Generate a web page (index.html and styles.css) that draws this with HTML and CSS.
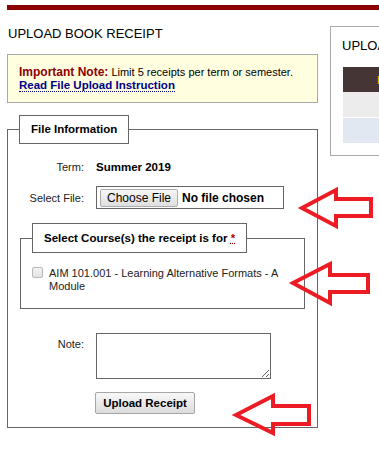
FILE: index.html
```html
<!DOCTYPE html>
<html lang="en">
<head>
    <meta charset="UTF-8">
    <meta name="viewport" content="width=device-width, initial-scale=1.0">
    <title>Upload Book Receipt</title>
    <link rel="stylesheet" href="styles.css">
</head>
<body>
    <div class="page">
        <div class="top-bar"></div>
        <div class="content">
            <div class="main-col">
                <h2 class="page-title">UPLOAD BOOK RECEIPT</h2>
                <div class="note-box">
                    <span class="note-label">Important Note:</span> Limit 5 receipts per term or semester.<br>
                    <a href="#" class="note-link">Read File Upload Instruction</a>
                </div>

                <fieldset class="file-info">
                    <legend>File Information</legend>
                    <div class="form-row">
                        <label class="form-label">Term:</label>
                        <span class="term-value">Summer 2019</span>
                    </div>
                    <div class="form-row row-file">
                        <label class="form-label" for="receiptFile">Select File:</label>
                        <input type="file" id="receiptFile" class="file-input">
                    </div>

                    <fieldset class="course-box">
                        <legend>Select Course(s) the receipt is for <abbr class="req" title="required">*</abbr></legend>
                        <label class="course-item">
                            <input type="checkbox" class="course-check">
                            <span>AIM 101.001 - Learning Alternative Formats - A Module</span>
                        </label>
                    </fieldset>

                    <div class="form-row row-note">
                        <label class="form-label" for="note">Note:</label>
                        <textarea id="note" class="note-input"></textarea>
                    </div>
                    <div class="row-submit">
                        <button class="btn-upload">Upload Receipt</button>
                    </div>
                </fieldset>
            </div>

            <div class="side-panel">
                <h2 class="panel-title">UPLOADED RECEIPTS</h2>
                <table class="receipt-table">
                    <thead>
                        <tr><th>Date</th></tr>
                    </thead>
                    <tbody>
                        <tr class="row-odd"><td>&nbsp;</td></tr>
                        <tr class="row-even"><td>&nbsp;</td></tr>
                    </tbody>
                </table>
            </div>
        </div>
    </div>

    <!-- red arrows pasted over the screenshot -->
    <svg class="callouts" width="379" height="450" viewBox="0 0 379 450">
        <polygon points="302,208 336,190 336,199 371,199 371,216 336,216 336,226" />
        <polygon points="293,283 330,264 330,275 368,275 368,292 330,292 330,303" />
        <polygon points="236,415 273,396 273,406 309,406 309,424 273,424 273,433" />
    </svg>
</body>
</html>
```

FILE: styles.css
```css
html, body {
    overflow: hidden;
}
body {
    margin: 0;
    font-family: "Liberation Sans", Arial, sans-serif;
    font-size: 11px;
    color: #222;
    background-color: #fff;
}
.page {
    padding: 5px 0 0 7px;
}
.top-bar {
    height: 5px;
    background-color: #8b0000;
}
.content {
    display: flex;
    align-items: flex-start;
}
.main-col {
    width: 311px;
    flex-shrink: 0;
}
.page-title {
    font-size: 13px;
    font-weight: normal;
    line-height: 15px;
    color: #000;
    margin: 16px 0 13px 1px;
}
.note-box {
    border: 1px solid #a8a8a8;
    background-color: #ffffe0;
    padding: 11px 11px 10px;
    line-height: 13px;
    color: #000;
}
.note-label {
    color: #8b0000;
    font-weight: bold;
    font-size: 12px;
}
.note-link {
    color: #00008b;
    font-weight: bold;
    font-size: 11.5px;
    text-decoration: none;
    border-bottom: 1px dotted #00008b;
}

/* fieldsets */
.file-info {
    margin: 12px 0 0;
    padding: 16px 11px 13px;
    border: 1px solid #666;
    min-width: 0;
}
.file-info > legend,
.course-box > legend {
    border: 1px solid #666;
    padding: 6px 11px;
    font-size: 11.5px;
    font-weight: bold;
    line-height: 15px;
    color: #000;
}
.course-box > legend {
    padding: 7px 11px 6px;
}
.form-row {
    display: flex;
    align-items: center;
    line-height: 14px;
}
.form-label {
    width: 65px;
    margin-right: 12px;
    text-align: right;
    flex-shrink: 0;
}
.term-value {
    font-size: 11.5px;
    font-weight: bold;
    color: #000;
}
.row-file {
    margin-top: 12px;
}
.file-input {
    box-sizing: border-box;
    width: 188px;
    height: 23px;
    padding: 2px 3px;
    border: 1px solid #666;
    font-family: "Liberation Sans", Arial, sans-serif;
    font-size: 12px;
    font-weight: bold;
    color: #000;
}
.file-input::file-selector-button {
    height: 18px;
    padding: 0 6px;
    margin-right: 4px;
    border: 1px solid #adadad;
    border-radius: 2px;
    background: linear-gradient(#f6f6f6, #dedede);
    font-family: "Liberation Sans", Arial, sans-serif;
    font-size: 12px;
    font-weight: normal;
    color: #000;
}

.course-box {
    margin: 14px 1px 0;
    padding: 14px 11px 15px;
    border: 1px solid #666;
    min-width: 0;
}
.req {
    color: #b00000;
    text-decoration: underline dotted #b00000;
}
.course-item {
    display: flex;
    align-items: flex-start;
    line-height: 13px;
    color: #222;
}
.course-check {
    appearance: none;
    box-sizing: border-box;
    width: 11px;
    height: 11px;
    margin: 0 6px 0 0;
    flex-shrink: 0;
    border: 1px solid #b8b8b8;
    border-radius: 2px;
    background: linear-gradient(#f4f4f4, #e2e2e2);
}

.row-note {
    margin-top: 24px;
    align-items: flex-start;
}
.row-note .form-label {
    padding-top: 4px;
}
.note-input {
    box-sizing: border-box;
    width: 175px;
    height: 46px;
    margin: 0;
    border: 1px solid #666;
}
.row-submit {
    margin: 13px 0 0 76px;
}
.btn-upload {
    box-sizing: border-box;
    width: 100px;
    height: 22px;
    padding: 0;
    border: 1px solid #a6a6a6;
    border-radius: 2px;
    background: linear-gradient(#f8f8f8, #dcdcdc);
    font-family: "Liberation Sans", Arial, sans-serif;
    font-size: 11.5px;
    font-weight: bold;
    color: #000;
}

/* right column */
.side-panel {
    width: 220px;
    flex-shrink: 0;
    margin: 16px 0 0 12px;
    padding: 11px 11px 12px;
    border: 1px solid #aaa;
}
.panel-title {
    font-size: 13px;
    font-weight: normal;
    line-height: 15px;
    color: #000;
    margin: 0 0 14px;
}
.receipt-table {
    width: 100%;
    margin-left: 1px;
    border-collapse: collapse;
}
.receipt-table th,
.receipt-table td {
    height: 25px;
    padding: 0 0 0 34px;
    text-align: left;
}
.receipt-table th {
    background-color: #453535;
    color: #e8a400;
    font-weight: bold;
}
.receipt-table td {
    padding-left: 40px;
}
.row-odd td {
    background-color: #ececec;
}
.row-even td {
    background-color: #e1e8f1;
    border-top: 1px solid #fff;
}

.callouts {
    position: absolute;
    top: 0;
    left: 0;
    pointer-events: none;
}
.callouts polygon {
    fill: none;
    stroke: #ed1c24;
    stroke-width: 4;
    stroke-linejoin: miter;
}
```
